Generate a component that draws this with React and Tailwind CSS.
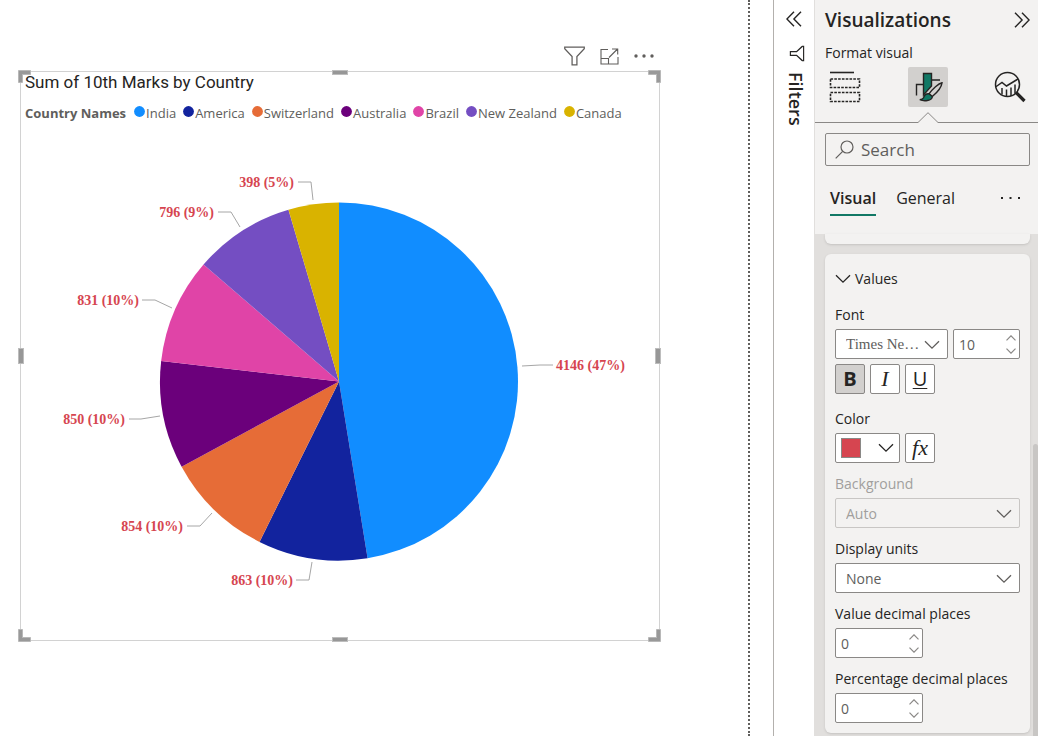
import React, { useState } from 'react';

const marks = [
  { country: 'India', value: 4146, label: '4146 (47%)', color: '#118dff', text: [535, 245], anchor: 'start', line: '501,241 519,240 532,240' },
  { country: 'America', value: 863, label: '863 (10%)', color: '#12239e', text: [272, 460], anchor: 'end', line: '275,455 288,455 291,437' },
  { country: 'Switzerland', value: 854, label: '854 (10%)', color: '#e66c37', text: [162, 406], anchor: 'end', line: '166,401 179,401 191,388' },
  { country: 'Australia', value: 850, label: '850 (10%)', color: '#6b007b', text: [104, 299], anchor: 'end', line: '108,294 120,294 139,291' },
  { country: 'Brazil', value: 831, label: '831 (10%)', color: '#e044a7', text: [118, 180], anchor: 'end', line: '121,175 134,175 151,183' },
  { country: 'New Zealand', value: 796, label: '796 (9%)', color: '#744ec2', text: [193, 92], anchor: 'end', line: '197,87 210,87 219,102' },
  { country: 'Canada', value: 398, label: '398 (5%)', color: '#d9b300', text: [273, 62], anchor: 'end', line: '277,57 290,57 292,75' },
];

const CX = 318;
const CY = 256.5;
const R = 179;

function buildSlices(data) {
  const total = data.reduce((sum, d) => sum + d.value, 0);
  let angle = 0;
  return data.map((d) => {
    const start = angle;
    angle += (d.value / total) * Math.PI * 2;
    const x1 = CX + R * Math.sin(start);
    const y1 = CY - R * Math.cos(start);
    const x2 = CX + R * Math.sin(angle);
    const y2 = CY - R * Math.cos(angle);
    const large = angle - start > Math.PI ? 1 : 0;
    return { ...d, path: `M${CX} ${CY}L${x1} ${y1}A${R} ${R} 0 ${large} 1 ${x2} ${y2}Z` };
  });
}

function PieChart() {
  return (
    <svg viewBox="0 0 638 515" className="block w-full" role="img" aria-label="Sum of 10th Marks by Country">
      {buildSlices(marks).map((s) => (
        <g key={s.country}>
          <path d={s.path} fill={s.color} />
          <polyline points={s.line} fill="none" stroke="#a6a6a6" />
          <text
            x={s.text[0]}
            y={s.text[1]}
            textAnchor={s.anchor}
            fill="#d64550"
            className="text-[14px] font-bold font-['Liberation_Serif',serif]"
          >
            {s.label}
          </text>
        </g>
      ))}
    </svg>
  );
}

function Chevron({ className = '' }) {
  return (
    <svg width="16" height="10" viewBox="0 0 16 10" fill="none" stroke="currentColor" strokeWidth="1.3" className={className}>
      <path d="M1 1.2l7 7 7-7" />
    </svg>
  );
}

function DoubleChevron({ className = '' }) {
  return (
    <svg width="16" height="16" viewBox="0 0 16 16" fill="none" stroke="#252423" strokeWidth="1.4" className={className}>
      <path d="M8 .7L.9 8 8 15.3M15 .7L7.9 8 15 15.3" />
    </svg>
  );
}

function Funnel({ className = '', stroke = '#605e5c', width = 1.2 }) {
  return (
    <svg viewBox="0 0 20 19" fill="none" stroke={stroke} strokeWidth={width} className={className}>
      <path d="M.7 1h18.6v1.6l-7 7.400v8H7.700v-8l-7-7.400z" />
    </svg>
  );
}

function ResizeHandles() {
  const edge = 'absolute bg-[#979797] border border-[#bdbdbd]';
  const corner = 'absolute size-[13px]';
  const shape = <path d="M.5.5h12v4h-8v8h-4z" fill="#999" stroke="#b8b8b8" />;
  return (
    <>
      <svg viewBox="0 0 13 13" className={`${corner} -left-[3px] -top-[2px]`}>{shape}</svg>
      <svg viewBox="0 0 13 13" className={`${corner} -right-[2px] -top-[2px] rotate-90`}>{shape}</svg>
      <svg viewBox="0 0 13 13" className={`${corner} -right-[2px] -bottom-[2px] rotate-180`}>{shape}</svg>
      <svg viewBox="0 0 13 13" className={`${corner} -left-[3px] -bottom-[2px] -rotate-90`}>{shape}</svg>
      <span className={`${edge} left-1/2 -top-[2px] h-[5px] w-4 -translate-x-1/2`} />
      <span className={`${edge} left-1/2 -bottom-[2px] h-[5px] w-4 -translate-x-1/2`} />
      <span className={`${edge} top-1/2 -left-[3px] h-4 w-[6px] -translate-y-1/2`} />
      <span className={`${edge} top-1/2 -right-[2px] h-4 w-[6px] -translate-y-1/2`} />
    </>
  );
}

function ReportCanvas() {
  return (
    <main className="min-w-0 flex-1 bg-white pr-[23px]">
      <div className="h-full border-r-2 border-dotted border-[#605e5c] pl-5 pr-[88px] pt-[46px]">
        <div className="flex h-[25px] items-start justify-end gap-[15px] pr-[6px]">
          <button aria-label="Filters on this visual">
            <Funnel className="h-[20px] w-[21px]" />
          </button>
          <button aria-label="Focus mode" className="pt-[2px]">
            <svg width="19" height="17" viewBox="0 0 19 17" fill="none" stroke="#605e5c" strokeWidth="1.1">
              <path d="M8 1.5H1v14.500h17V9M1 10.500h7.500V16M9 9.500L17.500 1M12 1h5.700v5.500" />
            </svg>
          </button>
          <button aria-label="More options" className="pt-[8px]">
            <svg width="20" height="4" viewBox="0 0 20 4" fill="#605e5c">
              <circle cx="2" cy="2" r="1.7" />
              <circle cx="10" cy="2" r="1.7" />
              <circle cx="18" cy="2" r="1.7" />
            </svg>
          </button>
        </div>
        <section className="relative border border-[#d2d2d2]">
          <h2 className="pl-1 text-[17px] leading-[20px] text-[#252423] font-[Roboto,sans-serif]">
            Sum of 10th Marks by Country
          </h2>
          <div className="flex h-[33px] items-center pl-1 pt-[8px] text-[13px] leading-[22px] text-[#605e5c]">
            <span className="mr-2 font-bold">Country Names</span>
            <ul className="flex gap-[7px]">
              {marks.map((m) => (
                <li key={m.country} className="flex items-center gap-px">
                  <svg width="11" height="11" viewBox="0 0 11 11" className="mb-[2px]">
                    <circle cx="5.5" cy="5.5" r="5.4" fill={m.color} />
                  </svg>
                  {m.country}
                </li>
              ))}
            </ul>
          </div>
          <PieChart />
          <ResizeHandles />
        </section>
      </div>
    </main>
  );
}

function FiltersPane() {
  return (
    <aside className="flex w-[42px] shrink-0 flex-col items-center border-l border-r border-l-[#b3b0ad] border-r-[#e1dfdd] bg-white pt-[11px]">
      <button aria-label="Expand filters">
        <DoubleChevron />
      </button>
      <div className="ml-[5px] mt-[19px]">
        <Funnel className="h-[15px] w-4 rotate-90" stroke="#252423" width={1.7} />
      </div>
      <h2 className="ml-1 mt-[11px] text-[18px] font-semibold leading-[22px] text-[#252423] [writing-mode:vertical-rl]">
        Filters
      </h2>
    </aside>
  );
}

function Field({ label, htmlFor, muted, children }) {
  return (
    <div>
      <label htmlFor={htmlFor} className={`mb-[3px] block leading-[22px] ${muted ? 'text-[#a19f9d]' : 'text-[#252423]'}`}>
        {label}
      </label>
      {children}
    </div>
  );
}

function SelectBox({ id, value, disabled, className = '', selectClass = '' }) {
  return (
    <div className={`relative ${className}`}>
      <select
        id={id}
        disabled={disabled}
        defaultValue={value}
        className={`block h-[30px] w-full appearance-none rounded-[2px] border pl-[10px] pr-6 opacity-100 ${
          disabled ? 'border-[#c8c6c4] bg-transparent text-[#a19f9d]' : 'border-[#8a8886] bg-white text-[#605e5c]'
        } ${selectClass}`}
      >
        <option>{value}</option>
      </select>
      <Chevron className="pointer-events-none absolute right-2 top-[11px] text-[#605e5c]" />
    </div>
  );
}

function SpinBox({ id, initial, className = '' }) {
  const [value, setValue] = useState(initial);
  return (
    <div className={`flex h-[30px] items-center rounded-[2px] border border-[#8a8886] bg-white pl-[5px] pr-[3px] ${className}`}>
      <input
        id={id}
        aria-label={id === 'size' ? 'Font size' : undefined}
        value={value}
        onChange={(e) => setValue(Number(e.target.value) || 0)}
        className="min-w-0 flex-1 bg-transparent text-[#605e5c] outline-none"
      />
      <div className="flex flex-col gap-[7px] text-[#8a8886]">
        <button aria-label="Increase" onClick={() => setValue(value + 1)}>
          <svg width="10" height="6" viewBox="0 0 10 6" fill="none" stroke="currentColor" strokeWidth="1.2" className="block">
            <path d="M.5 5.3L5 .8l4.500 4.500" />
          </svg>
        </button>
        <button aria-label="Decrease" onClick={() => setValue(Math.max(0, value - 1))}>
          <svg width="10" height="6" viewBox="0 0 10 6" fill="none" stroke="currentColor" strokeWidth="1.2" className="block">
            <path d="M.5.7L5 5.200 9.500.7" />
          </svg>
        </button>
      </div>
    </div>
  );
}

function ValuesCard() {
  const styleBtn = 'flex size-[30px] items-center justify-center rounded-[2px] border border-[#8a8886] text-[#252423]';
  return (
    <section className="rounded-md bg-[#f3f2f1] px-[10px] pb-[10px] pt-[14px] text-[14px] shadow">
      <button className="flex items-center gap-1 font-medium leading-[22px] text-[#252423]">
        <Chevron />
        Values
      </button>
      <div className="mt-[14px]">
        <Field label="Font" htmlFor="font">
          <div className="flex gap-[5px]">
            <SelectBox id="font" value="Times Ne…" className="flex-1" selectClass="font-['Liberation_Serif',serif] text-[15px]" />
            <SpinBox id="size" initial={10} className="w-[67px]" />
          </div>
        </Field>
        <div className="mt-[5px] flex gap-[5px] leading-none">
          <button aria-label="Bold" className={`${styleBtn} bg-[#d2d0ce] text-[20px] font-bold`}>B</button>
          <button aria-label="Italic" className={`${styleBtn} bg-white text-[22px] italic font-['Liberation_Serif',serif]`}>I</button>
          <button aria-label="Underline" className={`${styleBtn} bg-white text-[20px] underline decoration-1 underline-offset-2`}>U</button>
        </div>
      </div>
      <div className="mt-[14px] flex flex-col gap-[10px]">
        <Field label="Color" htmlFor="color">
          <div className="flex gap-[5px]">
            <button id="color" className="flex h-[30px] w-[65px] items-center justify-between rounded-[2px] border border-[#8a8886] bg-white px-[5px] text-[#252423]">
              <span className="size-5 border border-[#8a8886] bg-[#d64550]" />
              <Chevron />
            </button>
            <button aria-label="Conditional formatting" className={`${styleBtn} bg-white text-[22px] italic leading-none font-['Liberation_Serif',serif]`}>
              fx
            </button>
          </div>
        </Field>
        <Field label="Background" htmlFor="background" muted>
          <SelectBox id="background" value="Auto" disabled />
        </Field>
        <Field label="Display units" htmlFor="units">
          <SelectBox id="units" value="None" />
        </Field>
        <Field label="Value decimal places" htmlFor="value-places">
          <SpinBox id="value-places" initial={0} className="w-[88px]" />
        </Field>
        <Field label="Percentage decimal places" htmlFor="percent-places">
          <SpinBox id="percent-places" initial={0} className="w-[88px]" />
        </Field>
      </div>
    </section>
  );
}

function BuildIcon() {
  return (
    <svg width="32" height="32" viewBox="0 0 32 32" fill="none" stroke="#252423" strokeWidth="1.6">
      <path d="M1 1.5h24" />
      <path d="M1.500 8h29v8.500h-29zM1.500 21.500h29v9h-29z" strokeDasharray="2.6 1.2" />
    </svg>
  );
}

function FormatIcon() {
  return (
    <svg width="30" height="30" viewBox="0 0 30 30" fill="none" stroke="#252423" strokeWidth="1.4">
      <path d="M3.500 23.500V12.500h6.500M19 8h8" />
      <path d="M10.500 1.500h8v12.500l-8 9z" fill="#117865" />
      <path d="M29 10.800c-3.500.7-9.500 6-13 11l3.300 2.700C24 20.500 28.500 15 29 10.800z" fill="#d2d0ce" />
      <path d="M15.800 21.800c-4-.2-4.700 2-5.300 3.900-.5 1.300-1.700 1.900-3.700 2 3.700 1.600 12.300 1.600 12.500-3.200z" fill="#117865" />
    </svg>
  );
}

function AnalyticsIcon() {
  return (
    <svg width="32" height="32" viewBox="0 0 32 32" fill="none" stroke="#252423" strokeWidth="1.5">
      <circle cx="13.5" cy="13.5" r="12" />
      <path d="M1.500 16l6.500-4.500 4.500 3.500L24 8M8 17v6.500M12.500 18.500v7M17 16.500v8.500M21 13.500v9" />
      <path d="M22 21.500l8.500 8.500" strokeWidth="3.200" />
    </svg>
  );
}

function VisualizationsPane() {
  return (
    <aside className="flex w-[223px] shrink-0 flex-col bg-[#f3f2f1]">
      <div className="pl-[10px] pr-2 pt-[7px] text-[#252423]">
        <div className="flex h-[26px] items-center justify-between">
          <h2 className="text-[19px] font-semibold">Visualizations</h2>
          <button aria-label="Collapse pane">
            <DoubleChevron className="rotate-180" />
          </button>
        </div>
        <p className="mt-[9px] text-[14px] font-medium leading-[22px]">Format visual</p>
      </div>
      <div className="mt-[3px] flex justify-between border-b border-[#8a8886] pb-[15px] pl-[10px] pr-2">
        <button aria-label="Build visual" className="flex size-10 items-center justify-center">
          <BuildIcon />
        </button>
        <button aria-label="Format visual" className="relative flex size-10 items-center justify-center rounded-[2px] bg-[#d2d0ce]">
          <FormatIcon />
          <svg width="22" height="11" viewBox="0 0 22 11" fill="#f3f2f1" className="absolute -bottom-[16px] left-[9px]">
            <path d="M1 11V9.500L11 .5l10 9V11z" />
            <path d="M0 10.500h1L11 .7l10 9.800h1" fill="none" stroke="#8a8886" />
          </svg>
        </button>
        <button aria-label="Analytics" className="flex size-10 items-center justify-center">
          <AnalyticsIcon />
        </button>
      </div>
      <div className="pl-[10px] pr-2 pt-[10px]">
        <label className="flex h-[33px] items-center gap-[7px] rounded-[2px] border border-[#8a8886] pl-[9px]">
          <svg width="19" height="19" viewBox="0 0 19 19" fill="none" stroke="#605e5c" strokeWidth="1.2">
            <circle cx="12" cy="7" r="6" />
            <path d="M7.700 11.300L.7 18.300" />
          </svg>
          <input
            aria-label="Search"
            placeholder="Search"
            className="min-w-0 flex-1 bg-transparent text-[17px] outline-none placeholder:text-[#605e5c] placeholder:opacity-100"
          />
        </label>
        <div className="mb-[18px] mt-[19px] flex items-start pl-[5px] text-[16px] leading-[26px] text-[#252423]">
          <button className="border-b-2 border-[#117865] pb-[3px] font-semibold">Visual</button>
          <button className="ml-5">General</button>
          <button aria-label="More" className="ml-auto mr-[10px] mt-3">
            <svg width="19" height="2" viewBox="0 0 19 2" fill="#252423" className="block">
              <path d="M0 0h2v2H0zM8.500 0h2v2h-2zM17 0h2v2h-2z" />
            </svg>
          </button>
        </div>
      </div>
      <div className="flex min-h-0 flex-1 bg-[#e1dfdd] pl-[10px]">
        <div className="flex-1">
          <div className="mb-[10px] h-[10px] rounded-b-md bg-[#f3f2f1] shadow" />
          <ValuesCard />
        </div>
        <div className="ml-[3px] w-[5px] pt-[210px]">
          <div className="h-full rounded-t-sm bg-[#c8c6c4]" />
        </div>
      </div>
    </aside>
  );
}

export default function App() {
  return (
    <div className="flex h-screen overflow-hidden bg-white font-['Open_Sans','Noto_Sans',sans-serif]">
      <ReportCanvas />
      <FiltersPane />
      <VisualizationsPane />
    </div>
  );
}
